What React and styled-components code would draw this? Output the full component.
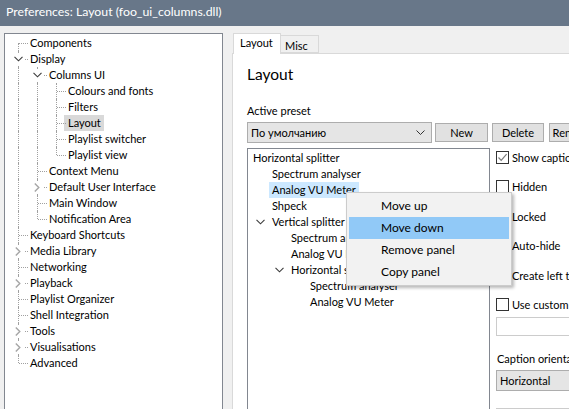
import React from 'react';
import styled, { createGlobalStyle } from 'styled-components';

const GlobalStyle = createGlobalStyle`
  html, body {
    margin: 0;
    padding: 0;
    background: #f0f0f0;
  }
  body {
    font-family: Lato, "Noto Sans", sans-serif;
    font-size: 11px;
    color: #000;
  }
`;

const navTree = [
    { label: 'Components' },
    {
        label: 'Display',
        open: true,
        children: [
            {
                label: 'Columns UI',
                open: true,
                children: [
                    { label: 'Colours and fonts' },
                    { label: 'Filters' },
                    { label: 'Layout', selected: true },
                    { label: 'Playlist switcher' },
                    { label: 'Playlist view' },
                ],
            },
            { label: 'Context Menu' },
            { label: 'Default User Interface', closed: true },
            { label: 'Main Window' },
            { label: 'Notification Area' },
        ],
    },
    { label: 'Keyboard Shortcuts' },
    { label: 'Media Library', closed: true },
    { label: 'Networking' },
    { label: 'Playback', closed: true },
    { label: 'Playlist Organizer' },
    { label: 'Shell Integration' },
    { label: 'Tools', closed: true },
    { label: 'Visualisations', closed: true },
    { label: 'Advanced' },
];

const panelTree = [
    { label: 'Horizontal splitter', level: 0 },
    { label: 'Spectrum analyser', level: 1 },
    { label: 'Analog VU Meter', level: 1, selected: true },
    { label: 'Shpeck', level: 1 },
    { label: 'Vertical splitter', level: 1, open: true },
    { label: 'Spectrum analyser', level: 2 },
    { label: 'Analog VU Meter', level: 2 },
    { label: 'Horizontal splitter', level: 2, open: true },
    { label: 'Spectrum analyser', level: 3 },
    { label: 'Analog VU Meter', level: 3 },
];

const options = [
    { label: 'Show caption', checked: true },
    { label: 'Hidden' },
    { label: 'Locked' },
    { label: 'Auto-hide' },
    { label: 'Create left toolbar' },
    { label: 'Use custom title' },
];

const menuItems = ['Move up', 'Move down', 'Remove panel', 'Copy panel'];

// flatten the nav tree into rows, each with its guide cells
const flatten = (nodes, guides = [], rows = [], root = true) => {
    nodes.forEach((node, i) => {
        const last = i === nodes.length - 1;
        const first = root && i === 0;
        const own = first ? 'first' : last ? 'last' : 'tee';
        rows.push({ ...node, guides: [...guides, own] });
        if (node.children && node.open) {
            flatten(node.children, [...guides, last ? 'none' : 'pipe'], rows, false);
        }
    });
    return rows;
};

const ChevronDown = () => (
    <svg width="9" height="6" viewBox="0 0 9 6">
        <path d="M0.5 0.8 L4.5 4.8 L8.5 0.8" fill="none" stroke="#3b3b3b" strokeWidth="1.1" />
    </svg>
);

const ChevronRight = () => (
    <svg width="6" height="9" viewBox="0 0 6 9">
        <path d="M0.8 0.5 L4.8 4.5 L0.8 8.5" fill="none" stroke="#a6a6a6" strokeWidth="1.4" />
    </svg>
);

const SmallArrow = () => (
    <svg width="9" height="5" viewBox="0 0 9 5">
        <path d="M0.5 0.5 L4.5 4.5 L8.5 0.5" fill="none" stroke="#333" strokeWidth="1" />
    </svg>
);

const Check = () => (
    <svg width="11" height="11" viewBox="0 0 11 11">
        <path d="M1.5 5.5 L4.2 8.3 L9.6 2.2" fill="none" stroke="#7a7a7a" strokeWidth="1.2" />
    </svg>
);

export default function App() {
    const rows = flatten(navTree);

    return (
        <Window>
            <GlobalStyle />
            <TitleBar>Preferences: Layout (foo_ui_columns.dll)</TitleBar>
            <Body>
                <NavTree>
                    {rows.map((row, i) => (
                        <NavRow key={i}>
                            {row.guides.map((g, j) => (
                                <Guide key={j} $kind={g}>
                                    {j === row.guides.length - 1 && (row.open || row.closed) ? (
                                        <Expander>{row.open ? <ChevronDown /> : <ChevronRight />}</Expander>
                                    ) : null}
                                </Guide>
                            ))}
                            <NavLabel $selected={row.selected}>{row.label}</NavLabel>
                        </NavRow>
                    ))}
                </NavTree>

                <TabArea>
                    <TabStrip>
                        <Tab $active $width={48}>Layout</Tab>
                        <Tab $width={38}>Misc</Tab>
                    </TabStrip>
                    <TabPage>
                        <Heading>Layout</Heading>
                        <FieldLabel>Active preset</FieldLabel>
                        <PresetRow>
                            <Combo $width={185}>
                                <span>По умолчанию</span>
                                <SmallArrow />
                            </Combo>
                            <Button $width={53}>New</Button>
                            <Button $width={52} $gap={4}>Delete</Button>
                            <Button $width={46} $gap={5}>Rename</Button>
                        </PresetRow>
                        <Columns>
                            <PanelTree>
                                {panelTree.map((item, i) => (
                                    <PanelRow key={i}>
                                        {item.level > 1 ? <Indent $levels={item.level - 1} /> : null}
                                        {item.level > 0 ? (
                                            <ExpandCell>{item.open ? <ChevronDown /> : null}</ExpandCell>
                                        ) : null}
                                        <PanelLabel $selected={item.selected}>{item.label}</PanelLabel>
                                    </PanelRow>
                                ))}
                            </PanelTree>
                            <Options>
                                <CheckList>
                                    {options.map((opt) => (
                                        <CheckRow key={opt.label}>
                                            <CheckBox>{opt.checked ? <Check /> : null}</CheckBox>
                                            <span>{opt.label}</span>
                                        </CheckRow>
                                    ))}
                                </CheckList>
                                <TextInput />
                                <OptionLabel>Caption orientation</OptionLabel>
                                <Combo $width={120}>
                                    <span>Horizontal</span>
                                </Combo>
                                <LowerBox />
                            </Options>
                        </Columns>
                    </TabPage>
                </TabArea>
            </Body>

            <ContextMenu>
                {menuItems.map((item) => (
                    <MenuItem key={item} $hover={item === 'Move down'}>
                        {item}
                    </MenuItem>
                ))}
            </ContextMenu>
        </Window>
    );
}

const Window = styled.div`
    position: relative;
    width: 569px;
    height: 409px;
    overflow: hidden;
    background: #f0f0f0;
`;

const TitleBar = styled.div`
    height: 26px;
    line-height: 24px;
    padding-left: 6px;
    background: #687789;
    color: #ffffff;
    font-size: 12.3px;
    white-space: nowrap;
`;

const Body = styled.div`
    display: flex;
    align-items: flex-start;
    padding: 7px 0 0 4px;
`;

const NavTree = styled.div`
    flex-shrink: 0;
    box-sizing: border-box;
    width: 219px;
    height: 400px;
    padding: 1px 0 0 4px;
    background: #fff;
    border: 1px solid #828790;
`;

const NavRow = styled.div`
    display: flex;
    height: 16px;
    align-items: center;
    white-space: nowrap;
`;

const Guide = styled.div`
    position: relative;
    flex-shrink: 0;
    width: 19px;
    height: 16px;

    &::before {
        content: '';
        display: ${(p) => (p.$kind === 'none' ? 'none' : 'block')};
        position: absolute;
        left: 9px;
        top: ${(p) => (p.$kind === 'first' ? '8px' : '0')};
        height: ${(p) => (p.$kind === 'first' || p.$kind === 'last' ? '8px' : '16px')};
        border-left: 1px dotted #a0a0a0;
    }

    &::after {
        content: '';
        display: ${(p) => (p.$kind === 'first' || p.$kind === 'last' || p.$kind === 'tee' ? 'block' : 'none')};
        position: absolute;
        left: 10px;
        top: 8px;
        width: 9px;
        border-top: 1px dotted #a0a0a0;
    }
`;

const Expander = styled.div`
    position: absolute;
    z-index: 1;
    left: 3px;
    top: 2px;
    width: 12px;
    height: 12px;
    display: flex;
    align-items: center;
    justify-content: center;
    background: #fff;
`;

const NavLabel = styled.span`
    margin-left: -2px;
    padding: 0 3px 0 4px;
    height: 16px;
    line-height: 15px;
    background: ${(p) => (p.$selected ? '#d9d9d9' : 'transparent')};
`;

const TabArea = styled.div`
    flex: 1;
    margin-left: 9px;
    display: flex;
    flex-direction: column;
`;

const TabStrip = styled.div`
    display: flex;
    align-items: flex-end;
    height: 20px;
    padding-left: 1px;
`;

const Tab = styled.div`
    position: relative;
    z-index: ${(p) => (p.$active ? 1 : 0)};
    box-sizing: border-box;
    width: ${(p) => p.$width}px;
    height: ${(p) => (p.$active ? '21px' : '18px')};
    margin-bottom: ${(p) => (p.$active ? '-1px' : '0')};
    padding: ${(p) => (p.$active ? '2px 0 0 6px' : '3px 0 0 4px')};
    border: 1px solid #d9d9d9;
    border-bottom: ${(p) => (p.$active ? 'none' : '1px solid #d9d9d9')};
    border-left: ${(p) => (p.$active ? '1px solid #d9d9d9' : 'none')};
    background: ${(p) => (p.$active ? '#fff' : '#f0f0f0')};
    line-height: 14px;
`;

const TabPage = styled.div`
    box-sizing: border-box;
    height: 400px;
    padding-left: 14px;
    background: #fff;
    border: 1px solid #d9d9d9;
`;

const Heading = styled.div`
    margin-top: 10px;
    height: 20px;
    line-height: 20px;
    font-size: 15.5px;
`;

const FieldLabel = styled.div`
    margin-top: 20px;
    height: 14px;
    line-height: 14px;
`;

const PresetRow = styled.div`
    display: flex;
    align-items: center;
    margin-top: 4px;
    height: 21px;
`;

const Combo = styled.div`
    flex-shrink: 0;
    box-sizing: border-box;
    display: flex;
    align-items: center;
    justify-content: space-between;
    width: ${(p) => p.$width}px;
    height: 21px;
    padding: 0 6px 0 3px;
    background: #e5e5e5;
    border: 1px solid #adadad;
    white-space: nowrap;
`;

const Button = styled.div`
    flex-shrink: 0;
    box-sizing: border-box;
    width: ${(p) => p.$width}px;
    height: 19px;
    margin-left: ${(p) => p.$gap || 3}px;
    line-height: 17px;
    text-align: center;
    background: #e1e1e1;
    border: 1px solid #adadad;
    white-space: nowrap;
`;

const Columns = styled.div`
    display: grid;
    grid-template-columns: 243px 1fr;
    column-gap: 6px;
    margin-top: 5px;
`;

const PanelTree = styled.div`
    box-sizing: border-box;
    height: 270px;
    padding: 1px 0 0 2px;
    background: #fff;
    border: 1px solid #828790;
`;

const PanelRow = styled.div`
    display: flex;
    align-items: center;
    height: 16px;
    white-space: nowrap;
`;

const Indent = styled.div`
    flex-shrink: 0;
    width: ${(p) => p.$levels * 19}px;
`;

const ExpandCell = styled.div`
    flex-shrink: 0;
    display: flex;
    align-items: center;
    justify-content: center;
    width: 19px;
    height: 16px;
    padding-left: 1px;
    box-sizing: border-box;
`;

const PanelLabel = styled.span`
    padding: 0 3px;
    height: 16px;
    line-height: 15px;
    background: ${(p) => (p.$selected ? '#cce8ff' : 'transparent')};
`;

const Options = styled.div`
    display: flex;
    flex-direction: column;
    white-space: nowrap;
`;

const CheckList = styled.div`
    display: flex;
    flex-direction: column;
    gap: 13.5px;
    margin-top: 1px;
`;

const CheckRow = styled.div`
    display: flex;
    align-items: center;
    gap: 3px;
    height: 16px;
`;

const CheckBox = styled.div`
    flex-shrink: 0;
    box-sizing: border-box;
    width: 13px;
    height: 13px;
    display: flex;
    align-items: center;
    justify-content: center;
    background: #fff;
    border: 1px solid #333;
`;

const TextInput = styled.div`
    box-sizing: border-box;
    height: 19px;
    margin-top: 4px;
    width: 120px;
    background: #fff;
    border: 1px solid #cccccc;
`;

const OptionLabel = styled.div`
    margin-top: 16px;
    height: 14px;
    line-height: 14px;
    margin-bottom: 4px;
    padding-left: 1px;
`;

const LowerBox = styled.div`
    box-sizing: border-box;
    height: 21px;
    margin-top: 17px;
    width: 120px;
    background: #e5e5e5;
    border: 1px solid #cccccc;
`;

const ContextMenu = styled.div`
    position: absolute;
    left: 346px;
    top: 192px;
    width: 166px;
    box-sizing: border-box;
    padding: 2px;
    background: #f2f2f2;
    border: 1px solid #cccccc;
    box-shadow: 2px 2px 3px rgba(0, 0, 0, 0.28);
    font-size: 12px;
`;

const MenuItem = styled.div`
    height: 22px;
    line-height: 22px;
    padding-left: 32px;
    background: ${(p) => (p.$hover ? '#91c9f7' : 'transparent')};
`;
